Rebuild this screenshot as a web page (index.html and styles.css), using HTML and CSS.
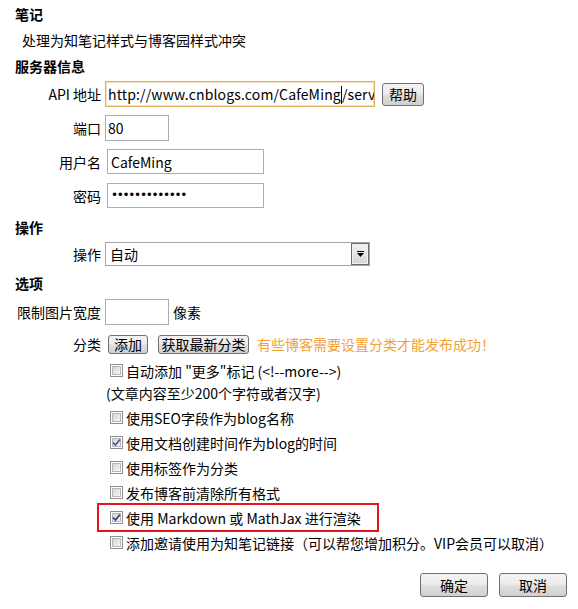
FILE: index.html
```html
<!DOCTYPE html>
<html lang="zh">
<head>
    <meta charset="UTF-8">
    <title>设置</title>
    <link rel="stylesheet" href="styles.css">
</head>
<body>
    <div class="settings">
        <h3 class="section-title">笔记</h3>
        <div class="note">处理为知笔记样式与博客园样式冲突</div>

        <h3 class="section-title title-server">服务器信息</h3>
        <div class="field-row row-api">
            <span class="field-label">API 地址</span>
            <div class="text-box api-box"><span class="api-text">http://www.cnblogs.com/CafeMing<span class="caret"></span>/serv</span></div>
            <button class="btn btn-help">帮助</button>
        </div>
        <div class="field-row row-port">
            <span class="field-label">端口</span>
            <input class="text-box short-box" type="text" value="80">
        </div>
        <div class="field-row row-user">
            <span class="field-label">用户名</span>
            <input class="text-box user-box" type="text" value="CafeMing">
        </div>
        <div class="field-row row-pass">
            <span class="field-label">密码</span>
            <div class="text-box user-box pass-box">•••••••••••••</div>
        </div>

        <h3 class="section-title title-op">操作</h3>
        <div class="field-row row-select">
            <span class="field-label">操作</span>
            <div class="select-box">
                <span class="select-text">自动</span>
                <span class="select-arrow">
                    <svg width="9" height="7" viewBox="0 0 9 7"><rect x="1" y="0" width="7" height="1" fill="#000"/><polygon points="1,2 8,2 4.5,6" fill="#000"/></svg>
                </span>
            </div>
        </div>

        <h3 class="section-title title-opt">选项</h3>
        <div class="field-row row-width">
            <span class="field-label">限制图片宽度</span>
            <input class="text-box short-box" type="text" value="">
            <span class="unit">像素</span>
        </div>
        <div class="field-row row-cat">
            <span class="field-label">分类</span>
            <button class="btn btn-small btn-add">添加</button>
            <button class="btn btn-small btn-fetch">获取最新分类</button>
            <span class="warn">有些博客需要设置分类才能发布成功！</span>
        </div>

        <div class="check-list">
            <div class="check-row">
                <span class="box"></span>自动添加 "更多"标记 (&lt;!--more--&gt;)
            </div>
            <div class="check-sub">(文章内容至少200个字符或者汉字)</div>
            <div class="check-row"><span class="box"></span>使用SEO字段作为blog名称</div>
            <div class="check-row">
                <span class="box checked"><svg width="9" height="9" viewBox="0 0 9 9"><path d="M1 4.5 L3.5 7 L8 1.5" fill="none" stroke="#4b5a86" stroke-width="1.7"/></svg></span>使用文档创建时间作为blog的时间
            </div>
            <div class="check-row"><span class="box"></span>使用标签作为分类</div>
            <div class="check-row"><span class="box"></span>发布博客前清除所有格式</div>
            <div class="check-row marked">
                <span class="box checked"><svg width="9" height="9" viewBox="0 0 9 9"><path d="M1 4.5 L3.5 7 L8 1.5" fill="none" stroke="#2c3f78" stroke-width="1.7"/></svg></span>使用 Markdown 或 MathJax 进行渲染
            </div>
            <div class="check-row"><span class="box"></span>添加邀请使用为知笔记链接（可以帮您增加积分。VIP会员可以取消）</div>
        </div>

        <div class="actions">
            <button class="btn btn-big">确定</button>
            <button class="btn btn-big">取消</button>
        </div>
    </div>
</body>
</html>
```

FILE: styles.css
```css
body {
    margin: 0;
    font-family: "Noto Sans CJK SC", sans-serif;
    font-size: 14px;
    color: #000;
    background: #fff;
}
.settings {
    padding: 4px 11px 0 15px;
}
.section-title {
    margin: 0;
    font-size: 14px;
    font-weight: bold;
    line-height: 20px;
}
.note {
    margin: 6px 0 0 7px;
    line-height: 20px;
}
.title-server { margin-top: 6px; }
.title-op { margin-top: 9px; }
.title-opt { margin-top: 7px; }

.field-row {
    display: flex;
    align-items: center;
}
.row-api { margin-top: 5px; }
.row-port { margin-top: 8px; }
.row-user { margin-top: 8px; }
.row-pass { margin-top: 9px; }
.row-select { margin-top: 5px; }
.row-width { margin-top: 6px; }
.row-cat { margin-top: 8px; height: 22px; }

.field-label {
    width: 86px;
    margin-right: 4px;
    text-align: right;
    white-space: nowrap;
    line-height: 20px;
}
.text-box {
    box-sizing: border-box;
    height: 26px;
    border: 1px solid #abadb3;
    padding: 0 2px;
    font-family: inherit;
    font-size: 14px;
    line-height: 24px;
    color: #000;
    background: #fff;
    outline: none;
    margin: 0;
}
.api-box {
    width: 270px;
    border-color: #dcae5c;
    box-shadow: inset 0 0 0 1px #f6e3bd;
    white-space: nowrap;
    overflow: hidden;
}
.api-text {
    letter-spacing: 0.15px;
}
.caret {
    display: inline-block;
    width: 1px;
    height: 18px;
    background: #000;
    vertical-align: middle;
    margin-top: -2px;
}
.short-box { width: 64px; }
.user-box {
    width: 157px;
    height: 25px;
    margin-left: 2px;
    padding-left: 3px;
}
.pass-box {
    font-family: "DejaVu Sans", sans-serif;
    font-size: 12px;
    letter-spacing: -1.3px;
    line-height: 23px;
}
.unit { margin-left: 4px; }

.select-box {
    box-sizing: border-box;
    width: 265px;
    height: 24px;
    border: 1px solid #a5a5a5;
    display: flex;
    align-items: center;
    justify-content: space-between;
    background: #fff;
}
.select-text {
    padding-left: 4px;
    line-height: 20px;
}
.select-arrow {
    box-sizing: border-box;
    width: 18px;
    height: 22px;
    border: 1px solid #6f6f6f;
    box-shadow: inset 0 0 0 1px #f0f0f0;
    background: linear-gradient(#f2f2f2, #d6d6d6);
    display: flex;
    align-items: center;
    justify-content: center;
}

.btn {
    box-sizing: border-box;
    font-family: inherit;
    font-size: 14px;
    color: #000;
    border: 1px solid #707070;
    border-radius: 3px;
    background: linear-gradient(#f4f4f4 0%, #ececec 45%, #dedede 55%, #d0d0d0 100%);
    padding: 0;
    margin: 0;
    line-height: 18px;
}
.btn-help {
    width: 42px;
    height: 23px;
    margin-left: 7px;
}
.btn-small { height: 19px; line-height: 16px; }
.btn-add { width: 40px; margin-left: 3px; }
.btn-fetch { width: 91px; margin-left: 10px; }
.warn {
    margin-left: 8px;
    color: #f7a033;
    line-height: 20px;
}

.check-list {
    margin-top: 4px;
}
.check-row {
    display: flex;
    align-items: center;
    height: 25px;
    padding-left: 95px;
    white-space: nowrap;
}
.check-row:first-child { height: 23px; }
.check-sub {
    line-height: 23px;
    padding-left: 91px;
}
.box {
    position: relative;
    box-sizing: border-box;
    width: 13px;
    height: 13px;
    border: 1px solid #8e8f8f;
    background: #fff;
    margin-right: 3px;
    display: flex;
    align-items: center;
    justify-content: center;
}
.box::before {
    content: "";
    position: absolute;
    left: 1px;
    top: 1px;
    right: 1px;
    bottom: 1px;
    border: 1px solid #b4b7bb;
    background: linear-gradient(135deg, #d3d6da, #f6f6f6);
}
.box svg {
    position: relative;
}
.marked {
    width: fit-content;
    margin-left: 84px;
    padding-left: 11px;
    padding-right: 16px;
    outline: 2px solid #e8161c;
}

.actions {
    display: flex;
    justify-content: flex-end;
    gap: 11px;
    margin-top: 18px;
}
.btn-big {
    width: 68px;
    height: 24px;
}
```
